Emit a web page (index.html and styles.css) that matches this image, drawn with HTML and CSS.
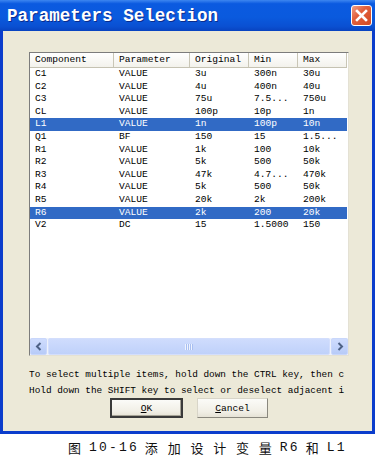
FILE: index.html
```html
<!DOCTYPE html>
<html lang="en">
<head>
    <meta charset="UTF-8">
    <title>Parameters Selection</title>
    <link rel="stylesheet" href="styles.css">
</head>
<body>
    <div class="window">
        <div class="titlebar">
            <span class="title">Parameters Selection</span>
            <span class="close">
                <svg width="13" height="13" viewBox="0 0 13 13"><path d="M2 2 L11 11 M11 2 L2 11" stroke="#fff" stroke-width="2.6" stroke-linecap="square"/></svg>
            </span>
        </div>
        <div class="client">
            <div class="listbox">
                <div class="head">
                    <span>Component</span><span>Parameter</span><span>Original</span><span>Min</span><span>Max</span>
                </div>
                <div class="rows">
                    <div class="row"><span>C1</span><span>VALUE</span><span>3u</span><span>300n</span><span>30u</span></div>
                    <div class="row"><span>C2</span><span>VALUE</span><span>4u</span><span>400n</span><span>40u</span></div>
                    <div class="row"><span>C3</span><span>VALUE</span><span>75u</span><span>7.5...</span><span>750u</span></div>
                    <div class="row"><span>CL</span><span>VALUE</span><span>100p</span><span>10p</span><span>1n</span></div>
                    <div class="row sel"><span>L1</span><span>VALUE</span><span>1n</span><span>100p</span><span>10n</span></div>
                    <div class="row"><span>Q1</span><span>BF</span><span>150</span><span>15</span><span>1.5...</span></div>
                    <div class="row"><span>R1</span><span>VALUE</span><span>1k</span><span>100</span><span>10k</span></div>
                    <div class="row"><span>R2</span><span>VALUE</span><span>5k</span><span>500</span><span>50k</span></div>
                    <div class="row"><span>R3</span><span>VALUE</span><span>47k</span><span>4.7...</span><span>470k</span></div>
                    <div class="row"><span>R4</span><span>VALUE</span><span>5k</span><span>500</span><span>50k</span></div>
                    <div class="row"><span>R5</span><span>VALUE</span><span>20k</span><span>2k</span><span>200k</span></div>
                    <div class="row sel"><span>R6</span><span>VALUE</span><span>2k</span><span>200</span><span>20k</span></div>
                    <div class="row"><span>V2</span><span>DC</span><span>15</span><span>1.5000</span><span>150</span></div>
                </div>
                <div class="hscroll">
                    <span class="arrow">
                        <svg width="8" height="9" viewBox="0 0 8 9"><path d="M5.5 1 L2 4.5 L5.5 8" fill="none" stroke="#4d6185" stroke-width="2"/></svg>
                    </span>
                    <span class="track"><span class="thumb"><span class="grip"></span></span></span>
                    <span class="arrow">
                        <svg width="8" height="9" viewBox="0 0 8 9"><path d="M2.5 1 L6 4.5 L2.5 8" fill="none" stroke="#4d6185" stroke-width="2"/></svg>
                    </span>
                </div>
            </div>
            <div class="hint">
                <div>To select multiple items, hold down the CTRL key, then c</div>
                <div>Hold down the SHIFT key to select or deselect adjacent i</div>
            </div>
            <div class="buttons">
                <button class="btn default"><u>O</u>K</button>
                <button class="btn"><u>C</u>ancel</button>
            </div>
        </div>
    </div>
    <p class="caption">
        <span class="cjk">图</span>
        <span class="lat">10-16</span>
        <span class="cjk">添加设计变量</span>
        <span class="lat">R6</span>
        <span class="cjk">和</span>
        <span class="lat">L1</span>
    </p>
</body>
</html>
```

FILE: styles.css
```css
* {
    box-sizing: border-box;
}
body {
    margin: 0;
    background: #fff;
    font-family: "Liberation Mono", monospace;
    color: #000;
}
.window {
    width: 375px;
}
.titlebar {
    height: 31px;
    display: flex;
    align-items: center;
    justify-content: space-between;
    padding: 0 3px 0 7px;
    background: linear-gradient(#3d86f0, #0b5ae0 12%, #0a5ade 55%, #0a50d2 85%, #0843c0);
}
.title {
    color: #fff;
    font-size: 17.6px;
    font-weight: bold;
    text-shadow: 1px 1px 0 #0b2c8c;
}
.close {
    width: 21px;
    height: 21px;
    display: flex;
    align-items: center;
    justify-content: center;
    border: 1px solid #fff;
    border-radius: 3px;
    background: linear-gradient(135deg, #f0a088, #e2603c 40%, #d24a24);
}
.client {
    background: #ece9d8;
    border: 3px solid #0b3dcc;
    border-top: 0;
    padding: 21px 23px 13px 26px;
}
.listbox {
    height: 304px;
    display: flex;
    flex-direction: column;
    background: #fff;
    border: 1px solid;
    border-color: #7c7c7c #e4e1d4 #e4e1d4 #7c7c7c;
}
.head, .row {
    display: grid;
    grid-template-columns: 84px 76px 59px 49px 49px;
    width: 317px;
    font-size: 9.6px;
}
.head {
    height: 15px;
    background: linear-gradient(#ffffff, #f3f2ec);
    border-bottom: 1px solid #c5c2b2;
}
.head span {
    padding-left: 5px;
    line-height: 14px;
    border-right: 1px solid #c9c6b6;
}
.rows {
    flex: 1;
}
.row {
    height: 12.6px;
    line-height: 12.6px;
}
.row span {
    padding-left: 5px;
    white-space: nowrap;
}
.row.sel {
    background: #316ac5;
    color: #fff;
}
.hscroll {
    height: 17px;
    display: flex;
    background: #eef2fb;
}
.arrow {
    width: 17px;
    height: 17px;
    display: flex;
    align-items: center;
    justify-content: center;
    border: 1px solid #c9d7fb;
    border-radius: 2px;
    background: linear-gradient(#cfdcfd, #b7cbf8);
}
.track {
    flex: 1;
    padding: 0 1px;
}
.thumb {
    height: 17px;
    display: flex;
    align-items: center;
    justify-content: center;
    border: 1px solid #d3defc;
    border-radius: 2px;
    background: linear-gradient(#cfdcfd, #bfd1fa);
}
.grip {
    width: 8px;
    height: 6px;
    background: repeating-linear-gradient(90deg, #eef3ff 0 1px, #a9bff0 1px 2px);
}
.hint {
    margin-top: 11px;
    width: 320px;
    white-space: nowrap;
    font-size: 9.4px;
    line-height: 15.5px;
}
.buttons {
    display: flex;
    justify-content: center;
    gap: 14px;
}
.btn {
    width: 71px;
    height: 20px;
    padding: 0;
    font-family: "Liberation Mono", monospace;
    font-size: 9.6px;
    color: #000;
    background: linear-gradient(#fbfbf8, #f1efe6 70%, #e6e3d6);
    border: 1px solid;
    border-color: #d8d5c8 #8a887e #8a887e #d8d5c8;
}
.btn.default {
    width: 73px;
    border: 2px solid #3a3a3a;
    box-shadow: inset -1px -1px 0 #a6a396;
}
.caption {
    margin: 5px 0 0;
    padding-left: 68px;
    display: flex;
    gap: 8px;
    font-size: 13px;
    line-height: 18px;
    color: #111;
}
.caption .cjk {
    font-family: "Noto Sans CJK SC", sans-serif;
    letter-spacing: 9.8px;
    margin-right: -9.8px;
}
.caption .lat {
    font-family: "Liberation Mono", monospace;
    letter-spacing: 2.2px;
    margin-right: -2.2px;
}
```
